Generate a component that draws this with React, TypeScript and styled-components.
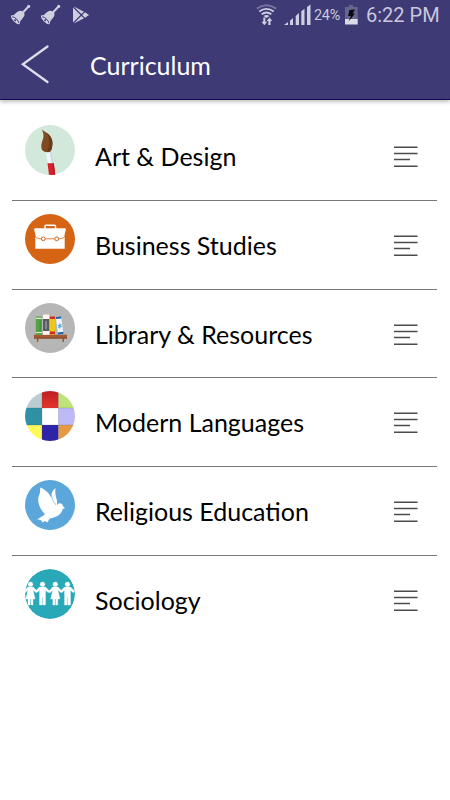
import React from "react";
import styled, { createGlobalStyle } from "styled-components";

const GlobalStyle = createGlobalStyle`
  * { box-sizing: border-box; }
  body { margin: 0; background: #fff; overflow: hidden; }
`;

const Screen = styled.main`
  width: 450px;
  height: 800px;
  background: #fff;
  font-family: "Lato", sans-serif;
`;

const Header = styled.header`
  height: 100px;
  background: #3d3a75;
  border-bottom: 1px solid #11094e;
  box-shadow: 0 2px 4px rgba(0, 0, 0, 0.25);
`;

const StatusBar = styled.div`
  height: 31px;
  display: flex;
  align-items: center;
  justify-content: space-between;
  color: #c9c7dc;
  font-family: "Roboto", sans-serif;
`;

const StatusGroup = styled.div`
  display: flex;
  height: 31px;
`;

const Percent = styled.span`
  width: 30px;
  font-size: 14.4px;
  line-height: 32px;
  white-space: nowrap;
  letter-spacing: -0.25px;
`;

const Clock = styled.span`
  width: 84px;
  font-size: 20px;
  line-height: 31px;
  white-space: nowrap;
`;

const TitleBar = styled.div`
  display: flex;
  align-items: center;
  height: 68px;
`;

const BackButton = styled.button`
  width: 90px;
  height: 68px;
  padding: 0;
  border: 0;
  background: none;
  display: block;
`;

const Title = styled.h1`
  margin: 0;
  color: #fff;
  font-size: 25px;
  font-weight: 400;
  line-height: 30px;
`;

const List = styled.ul`
  list-style: none;
  margin: 12px 13px 0 12px;
  padding: 0;
`;

const Row = styled.li`
  display: flex;
  height: 88.75px;
  padding: 13px 19px 0 13px;
  border-bottom: 1px solid #777;
  &:last-child { border-bottom: 0; }
`;

const Label = styled.span`
  flex: 1;
  margin-left: 20px;
  padding-top: 16px;
  font-size: 25px;
  line-height: 30px;
  color: #000;
  white-space: nowrap;
`;

const Disc = styled.svg`
  display: block;
  width: 50px;
  height: 50px;
  flex: none;
`;

const MenuIcon = styled.svg`
  display: block;
  width: 25px;
  height: 23px;
  margin-top: 20px;
  flex: none;
`;

const Bell = () => (
  <svg width="21" height="21" viewBox="0 0 21 21" fill="#cfcde0">
    <path d="M12 8.500 17.800 2.200" stroke="#cfcde0" strokeWidth="2" />
    <circle cx="18.200" cy="1.900" r="1.600" />
    <path d="M.5 11 Q4.500 10.500 6 8 Q8.500 5.500 11.500 6.500 L14 9 Q14.600 11.500 12 14 Q10 15.500 9 19.500 Q7 20.500 3.500 17 Q0 13.500 .5 11Z" />
    <path d="M1.900 12.200 Q4 12.500 6.500 15 Q8.400 17 8 18.300" fill="none" stroke="#3d3a75" strokeWidth="1" />
    <circle cx="4.700" cy="15.800" r="1" fill="#3d3a75" />
  </svg>
);

const LeftStatus = () => (
  <svg width="100" height="31" viewBox="0 0 100 31" fill="#cfcde0">
    <g transform="translate(10.500 4.500)"><Bell /></g>
    <g transform="translate(40.500 4.500)"><Bell /></g>
    <path d="M73 7.500 V22.500 L80.500 15Z M73.800 6.600 81.300 14.100 84 11.700Z M73.800 23.400 81.300 15.900 84 18.300Z M82.200 15 85 12.300 89 15 85 17.700Z" />
  </svg>
);

const SignalIcons = () => (
  <svg width="58" height="31" viewBox="0 0 58 31">
    <g fill="none" strokeWidth="1.900">
      <path d="M.8 8.600 Q10.500 1.800 20.200 8.600" stroke="#77749f" />
      <path d="M3.300 11.500 Q10.500 6.300 17.700 11.500" stroke="#cfcde0" />
      <path d="M5.700 14.200 Q10.500 10.700 15.300 14.200" stroke="#cfcde0" />
    </g>
    <path d="M7.500 15.900 Q10.500 14 13.500 15.900 L10.500 18Z M7.300 17.500 H9.300 V21.800 H11.200 L8.300 25.300 5.400 21.800 H7.300Z M12.300 25 V21 H10.700 L13.500 17.500 16.300 21 H14.500 V25Z" fill="#cfcde0" />
    <path d="M28 25 32 22 V25Z M34 20.700 37 18 V25 H34Z M39.700 16 43 13 V25 H39.700Z M45.300 11.300 48.500 8.700 V25 H45.300Z M51 6.900 54.500 4.500 V25 H51Z" fill="#cfcde0" />
  </svg>
);

const Battery = () => (
  <svg width="22" height="31" viewBox="0 0 22 31">
    <path d="M5 5 H9 V7 H13.700 V19.500 H1 V7 H5Z" fill="#67648f" />
    <path d="M1 19 H13.700 V24.500 H1Z" fill="#dddbe8" />
    <path d="M5.500 10 11 9.500 8.700 13.500 11 13.500 4.500 21.500 6.800 16 4 16Z" fill="#080810" />
  </svg>
);

const BackArrow = () => (
  <svg width="90" height="68" viewBox="0 31 90 68">
    <path d="M47.500 46.500 22.800 64.200 47.500 82" fill="none" stroke="#dedde9" strokeWidth="2.300" strokeLinecap="round" />
  </svg>
);

const Brush = () => (
  <>
    <circle cx="25" cy="25" r="25" fill="#d2e8da" />
    <path d="M20.500 25.500 H26.500 L28.500 38.500 H22.800Z" fill="#edf8fa" />
    <path d="M24.800 25.500 H26.500 L28.500 38.500 H26.700Z" fill="#c2dade" />
    <path d="M22.500 38.200 H28.800 L30.200 49.400 Q27 50.200 24 49.800Z" fill="#d9202b" />
    <path d="M27.300 38.200 H28.800 L30.200 49.400 28.200 49.700Z" fill="#b51d27" />
    <path d="M16.800 4.500 Q20 7 23 8.500 Q28 13 27.500 19.500 Q27 26 24.500 27 Q20 28 17.600 25.500 Q15 22 17.300 16 Q20 10 16.800 4.500Z" fill="#814922" />
    <path d="M22.500 9 Q29 14 27 22 Q26.500 27 22 27 Q26 19 22.500 9Z" fill="#683a1d" />
  </>
);

const Briefcase = () => (
  <>
    <circle cx="25" cy="25" r="25" fill="#d56414" />
    <path d="M20 15 V12.200 Q20 11.200 21 11.200 H29.500 Q30.500 11.200 30.500 12.200 V15" fill="none" stroke="#fff" strokeWidth="1.500" />
    <path d="M10.200 14.300 H39.800 Q41.300 14.300 40.800 16 L39.700 20 V34.700 H10.300 V20 L9.200 16 Q8.700 14.300 10.200 14.300Z" fill="#fff" />
    <path d="M9.500 21 Q11 24.800 15 24.800 H35 Q39 24.800 40.500 21" fill="none" stroke="#d56414" strokeWidth=".8" />
    <g fill="#fff" stroke="#d56414" strokeWidth="1"><circle cx="18.300" cy="24.800" r="1.900" /><circle cx="31.700" cy="24.800" r="1.900" /></g>
  </>
);

const Books = () => (
  <>
    <circle cx="25" cy="25" r="25" fill="#b5b6b5" />
    <path d="M9 31.800 H42 V35.500 H39 V39 H37.500 V35.500 H13.300 V39 H11.800 V35.500 H9Z" fill="#a35a33" />
    <path d="M9 34.700 H42 V35.500 H9Z" fill="#7c4327" />
    <path d="M10.800 13.500 H17 V31.800 H10.800Z" fill="#54a447" />
    <path d="M10.800 15.300 H17 M10.800 29.500 H17" stroke="#dcebd4" strokeWidth="1.200" />
    <path d="M15.200 17 V28" stroke="#3d8039" strokeWidth=".8" />
    <path d="M18 11.500 H24.200 V31.800 H18Z" fill="#fff3ee" />
    <path d="M18 16 H24.200 V28 H18Z" fill="#565c62" />
    <path d="M21 18 V26" stroke="#85898d" strokeWidth="2" />
    <path d="M25 13.500 H30 V31.800 H25Z" fill="#ecc81e" />
    <path d="M25 13.500 H30 V16 H25Z M25 28.500 H30 V31.300 H25Z" fill="#ca2b2b" />
    <path d="M30.800 14 36 13.300 38.500 31 33 31.800Z" fill="#eef6fb" />
    <path d="M30.800 14 36 13.300 36.300 15.500 31 16.100Z M32.800 29.400 38.300 28.700 38.500 31 33 31.800Z" fill="#2062a6" />
    <path d="M34.800 20.500 V25.500 M32.800 22.200 L36.800 23.800 M36.300 21.500 L33.300 24.600" stroke="#55afe0" strokeWidth="1.100" />
  </>
);

const Mosaic = () => (
  <>
    <defs>
      <clipPath id="mosaic-disc"><circle cx="25" cy="25" r="25" /></clipPath>
      <linearGradient id="red-tile" x2="0" y2="1"><stop stopColor="#bd1e22" /><stop offset="1" stopColor="#e5352c" /></linearGradient>
    </defs>
    <g clipPath="url(#mosaic-disc)">
      <path d="M0 0 H17 V17 H0Z" fill="#b9cdd3" />
      <path d="M17 0 H33.500 V17 H17Z" fill="url(#red-tile)" />
      <path d="M33.500 0 H50 V17 H33.500Z" fill="#bde37a" />
      <path d="M0 17 H17 V34 H0Z" fill="#2e91a4" />
      <path d="M17 17 H33.500 V34 H17Z" fill="#fff" />
      <path d="M33.500 17 H50 V34 H33.500Z" fill="#bebaf7" />
      <path d="M0 34 H17 V50 H0Z" fill="#fbfa58" />
      <path d="M17 34 H33.500 V50 H17Z" fill="#2e24a8" />
      <path d="M33.500 34 H50 V50 H33.500Z" fill="#e79b40" />
      <path d="M0 17 H50 M0 34 H50 M17 0 V50 M33.500 0 V50" stroke="#525759" strokeOpacity=".38" strokeWidth=".6" />
    </g>
  </>
);

const Dove = () => (
  <>
    <circle cx="25" cy="25" r="25" fill="#5ba6da" />
    <path d="M15.200 7.500 Q20 9 24 14 Q27 18 30 24.500 Q26 19.500 26.300 15 Q27 10.500 30.600 8 Q29.800 12 31 17 Q32.500 21 32 25 Q33.500 22.500 36 23.500 Q37.700 24.300 38 26 L40 28.500 37.800 28.700 Q37 33 32.500 36 Q27.500 38 24.500 38.800 L22.500 42.500 20 41 17.500 42.500 Q16.500 39 12 39.500 L20 34.500 Q16 30 14.500 26 Q12.600 21 13.500 17 Q15.500 13 15.200 7.500Z" fill="#fff" />
    <path d="M26.300 15 Q27 20.500 31 25" fill="none" stroke="#5ba6da" strokeWidth=".6" />
  </>
);

const Woman = () => (
  <>
    <circle cx="0" cy="15.300" r="2.400" />
    <path d="M-2.700 18 H2.700 L6.500 22 5.500 23.600 2.600 21.300 4.700 30 H2.500 V36 H.4 V30 H-.4 V36 H-2.500 V30 H-4.700 L-2.600 21.300 -5.500 24 -6.500 22.300Z" />
  </>
);

const Man = () => (
  <>
    <circle cx="0" cy="15.300" r="2.400" />
    <path d="M-3 18 H3 L7 22 5.800 23.800 3 21.300 V36 H.3 V28.500 H-.3 V36 H-3 V21.300 L-5.800 23.800 -7 22Z" />
  </>
);

const People = () => (
  <>
    <defs><clipPath id="people-disc"><circle cx="25" cy="25" r="25" /></clipPath></defs>
    <g clipPath="url(#people-disc)">
      <circle cx="25" cy="25" r="25" fill="#29a8b8" />
      <g fill="#fff" stroke="#fff" strokeWidth=".3">
        <g transform="translate(5.500 0)"><Woman /></g>
        <g transform="translate(17.500 0)"><Man /></g>
        <g transform="translate(30.300 0)"><Woman /></g>
        <g transform="translate(42.500 0)"><Man /></g>
      </g>
    </g>
  </>
);

const subjects = [
  { name: "Art & Design", Art: Brush },
  { name: "Business Studies", Art: Briefcase },
  { name: "Library & Resources", Art: Books },
  { name: "Modern Languages", Art: Mosaic },
  { name: "Religious Education", Art: Dove },
  { name: "Sociology", Art: People },
];

export default function App() {
  return (
    <Screen>
      <GlobalStyle />
      <Header>
        <StatusBar>
          <LeftStatus />
          <StatusGroup>
            <SignalIcons />
            <Percent>24%</Percent>
            <Battery />
            <Clock>6:22 PM</Clock>
          </StatusGroup>
        </StatusBar>
        <TitleBar>
          <BackButton aria-label="Back"><BackArrow /></BackButton>
          <Title>Curriculum</Title>
        </TitleBar>
      </Header>
      <List>
        {subjects.map(({ name, Art }) => (
          <Row key={name}>
            <Disc viewBox="0 0 50 50"><Art /></Disc>
            <Label>{name}</Label>
            <MenuIcon viewBox="0 0 25 23">
              <path d="M1 2.300 H24.500 M1 8.500 H24.500 M1 14.500 H17 M1 21.300 H24.500" stroke="#4b4b4b" strokeWidth="1.400" />
            </MenuIcon>
          </Row>
        ))}
      </List>
    </Screen>
  );
}
